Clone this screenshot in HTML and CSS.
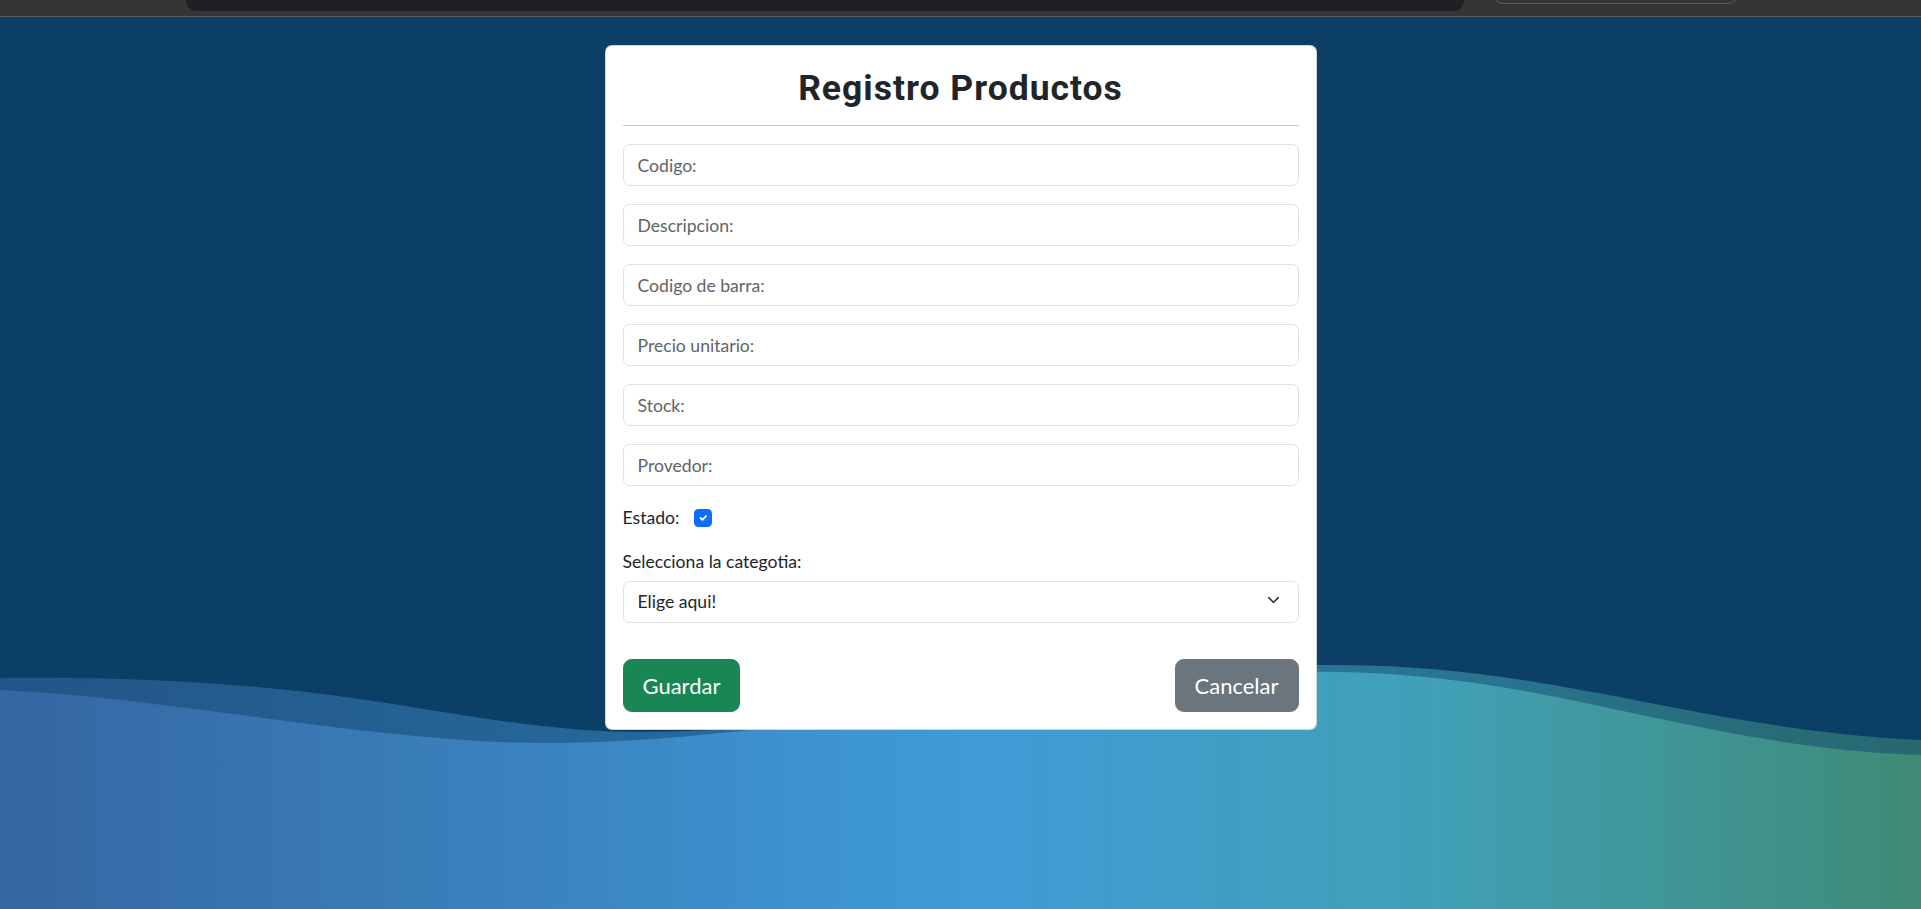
FILE: index.html
```html
<!DOCTYPE html>
<html lang="es">
<head>
<meta charset="utf-8">
<title>Registro Productos</title>
<link rel="stylesheet" href="styles.css">
</head>
<body>
<div class="chrome">
  <div class="chrome-tab"></div>
  <div class="chrome-pill"></div>
</div>
<main class="stage">
  <svg class="waves" viewBox="0 0 1921 892" preserveAspectRatio="none" aria-hidden="true">
    <defs>
      <linearGradient id="sea" gradientUnits="userSpaceOnUse" x1="0" y1="0" x2="1921" y2="0">
        <stop offset="0" stop-color="#3566a1"/>
        <stop offset="0.5" stop-color="#3e9bd8"/>
        <stop offset="0.75" stop-color="#41a0b6"/>
        <stop offset="1" stop-color="#3e8a75"/>
      </linearGradient>
    </defs>
    <path class="wave-back" d="M0 661 C 120 659, 250 665, 380 685 C 480 701, 560 715, 640 715 C 900 713, 1100 647, 1340 648 C 1560 649, 1700 713, 1921 723 L1921 892 L0 892 Z"/>
    <path class="wave-front" d="M0 673 C 180 681, 380 728, 560 726 C 800 723, 1100 651, 1340 655 C 1560 659, 1700 731, 1921 738 L1921 892 L0 892 Z"/>
  </svg>

  <form class="card">
    <h2 class="card-title">Registro Productos</h2>
    <hr class="divider">
    <div class="fields">
      <input class="field" type="text" placeholder="Codigo:">
      <input class="field" type="text" placeholder="Descripcion:">
      <input class="field" type="text" placeholder="Codigo de barra:">
      <input class="field" type="text" placeholder="Precio unitario:">
      <input class="field" type="text" placeholder="Stock:">
      <input class="field" type="text" placeholder="Provedor:">
    </div>
    <div class="estado">
      <span class="label">Estado:</span>
      <span class="check">
        <svg viewBox="0 0 20 20" width="12" height="12"><path d="M6 10l3 3 6-6" fill="none" stroke="#fff" stroke-width="3" stroke-linecap="round" stroke-linejoin="round"/></svg>
      </span>
    </div>
    <div class="label select-label">Selecciona la categotia:</div>
    <div class="select">
      <span>Elige aqui!</span>
      <svg class="chev" viewBox="0 0 16 10" width="13" height="8"><path d="M2 2l6 6 6-6" fill="none" stroke="#343a40" stroke-width="2" stroke-linecap="round" stroke-linejoin="round"/></svg>
    </div>
    <div class="actions">
      <button type="button" class="btn btn-green">Guardar</button>
      <button type="button" class="btn btn-gray">Cancelar</button>
    </div>
  </form>
</main>
</body>
</html>
```

FILE: styles.css
```css
* { box-sizing: border-box; }

html, body {
  margin: 0;
  padding: 0;
}

body {
  font-family: Lato, "Noto Sans", sans-serif;
  color: #212529;
  background: #0c3f66;
  overflow: hidden;
}

.chrome {
  height: 17px;
  background: #353535;
  border-bottom: 1px solid #5a5a5a;
  display: flex;
  align-items: flex-start;
  padding-left: 186px;
}

.chrome-tab {
  width: 1278px;
  height: 11px;
  background: #1f2023;
  border-radius: 0 0 13px 13px;
}

.chrome-pill {
  margin-left: 29px;
  margin-top: -10px;
  width: 245px;
  height: 14px;
  border: 1px solid #5c5c5c;
  border-radius: 0 0 10px 10px;
}

.stage {
  position: relative;
  min-height: 892px;
  background: #0c3f66;
  display: flex;
  justify-content: center;
  align-items: flex-start;
  padding-top: 28px;
}

.waves {
  position: absolute;
  left: 0;
  top: 0;
  width: 100%;
  height: 100%;
  z-index: 0;
}

.wave-back {
  fill: url(#sea);
  opacity: 0.55;
}

.wave-front {
  fill: url(#sea);
}

.card {
  position: relative;
  z-index: 1;
  width: 712px;
  margin: 0;
  background: #fff;
  border: 1px solid rgba(0, 0, 0, 0.175);
  border-radius: 7px;
  padding: 17px;
  display: flex;
  flex-direction: column;
}

.card-title {
  margin: 4px 0 0;
  font-family: Roboto, sans-serif;
  font-weight: 700;
  font-size: 35.5px;
  letter-spacing: 1px;
  line-height: 42px;
  text-align: center;
  color: #212529;
}

.divider {
  margin: 16px 0 18px;
  border: 0;
  border-top: 1px solid #c8c9ca;
  height: 0;
}

.fields {
  display: flex;
  flex-direction: column;
  gap: 18px;
}

.field {
  display: block;
  width: 100%;
  height: 42px;
  padding: 0 14px;
  font-family: Lato, "Noto Sans", sans-serif;
  font-size: 17.6px;
  color: #212529;
  background: #fff;
  border: 1px solid #dee2e6;
  border-radius: 6.6px;
  outline: none;
}

.field::placeholder {
  color: #5f6468;
  opacity: 1;
}

.label {
  font-size: 17.6px;
  line-height: 26.4px;
  color: #212529;
}

.estado {
  margin-top: 19px;
  display: flex;
  align-items: center;
  gap: 15px;
  height: 26.4px;
}

.check {
  width: 17.6px;
  height: 17.6px;
  border-radius: 4.4px;
  background: #0d6efd;
  display: flex;
  align-items: center;
  justify-content: center;
}

.select-label {
  margin-top: 18px;
}

.select {
  margin-top: 5px;
  height: 42px;
  border: 1px solid #dee2e6;
  border-radius: 6.6px;
  padding: 0 18px 0 14px;
  display: flex;
  align-items: center;
  justify-content: space-between;
  font-size: 17.6px;
  color: #212529;
}

.chev {
  margin-top: -3px;
}

.actions {
  margin-top: 36px;
  display: flex;
  justify-content: space-between;
}

.btn {
  height: 53.7px;
  padding: 0 19px;
  font-family: Lato, "Noto Sans", sans-serif;
  font-size: 22px;
  color: #fff;
  border: 1px solid transparent;
  border-radius: 8.8px;
  cursor: pointer;
}

.btn-green {
  background: #198754;
  border-color: #198754;
}

.btn-gray {
  background: #6c757d;
  border-color: #6c757d;
}
```
